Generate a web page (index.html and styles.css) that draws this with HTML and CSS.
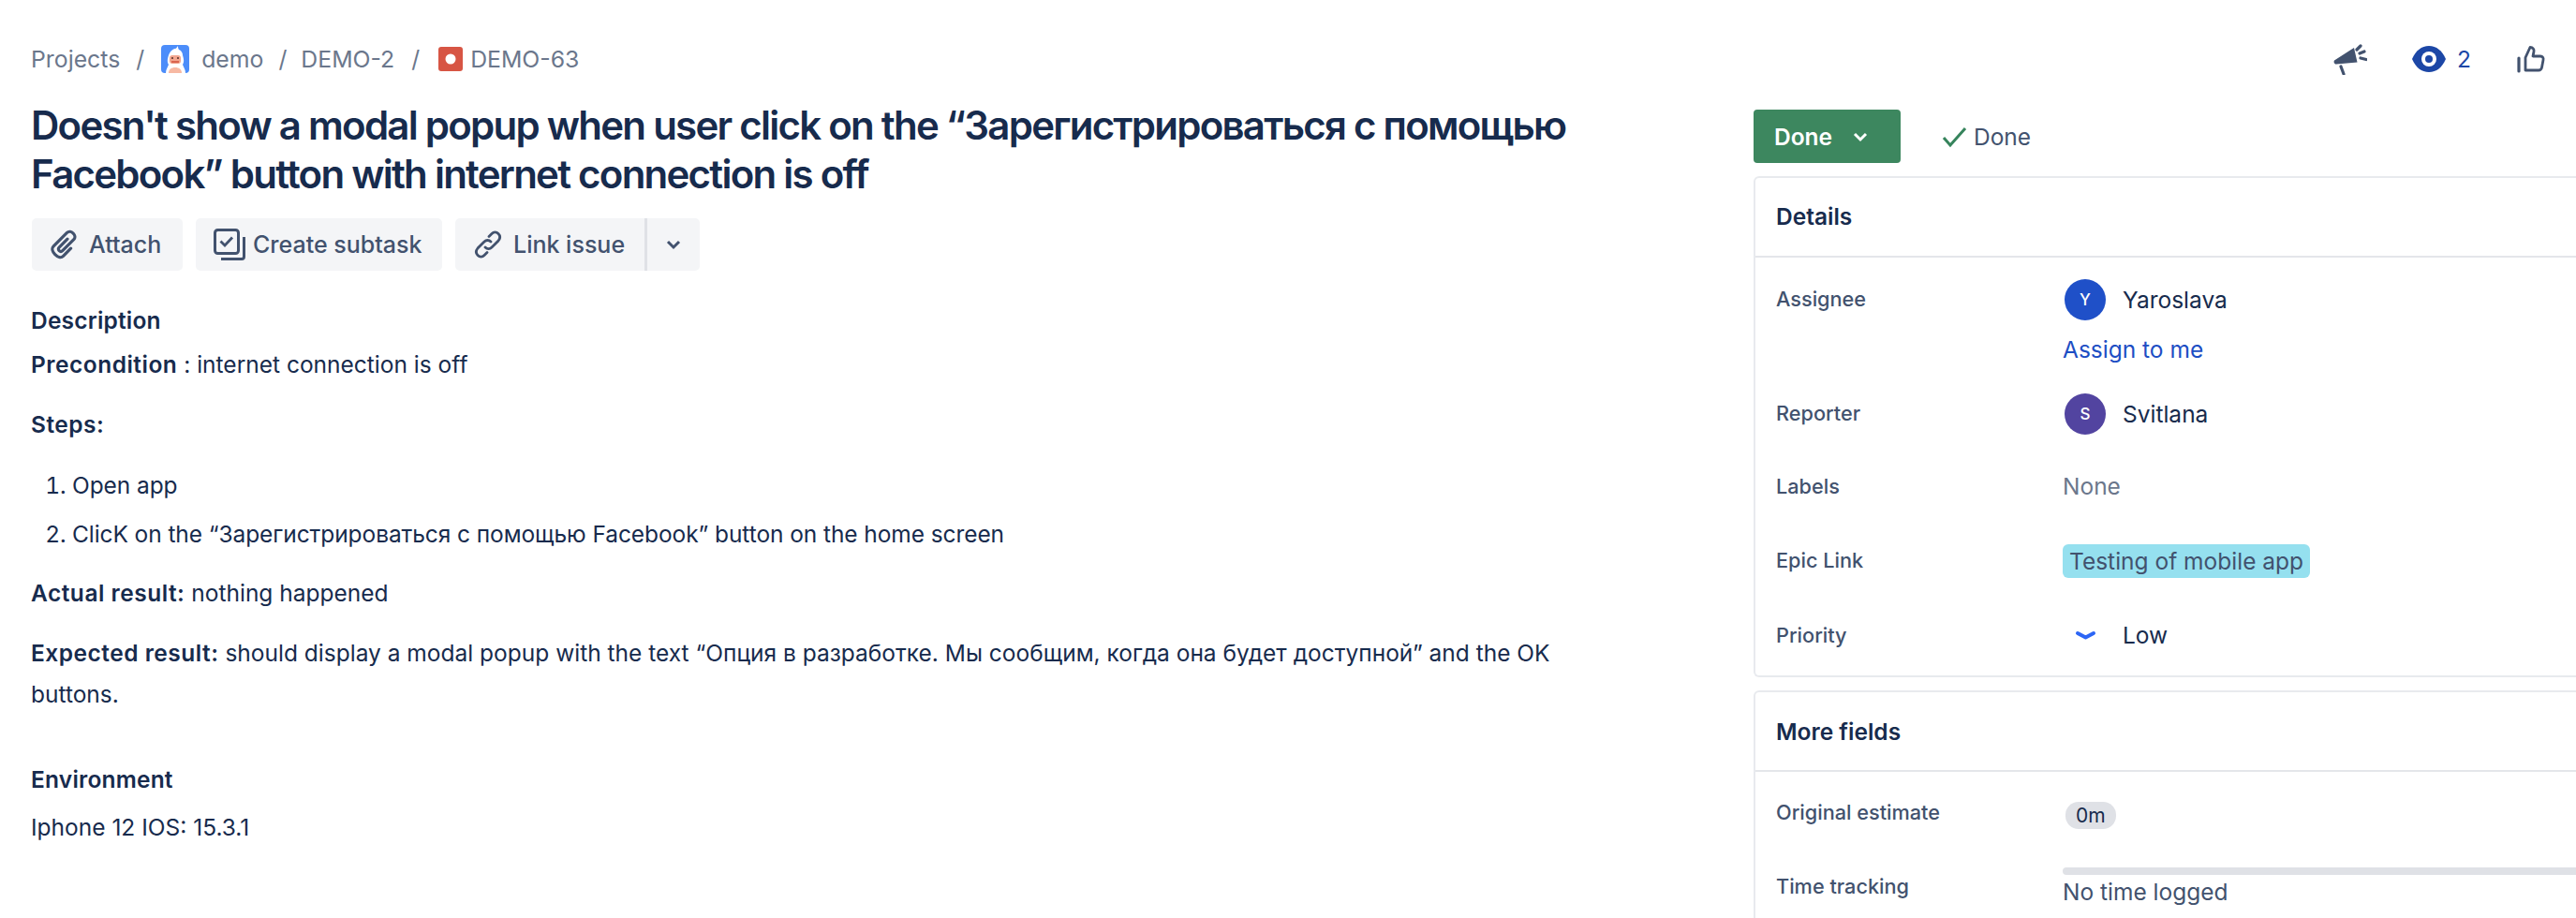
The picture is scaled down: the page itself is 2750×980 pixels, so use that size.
FILE: index.html
```html
<!DOCTYPE html>
<html>

	<head>
		<meta charset="UTF-8">
		<title>DEMO-63</title>
		<link rel="stylesheet" href="styles.css">
	</head>

	<body>
		<div class="page">
			<div class="topbar">
				<div class="crumbs">
					<span>Projects</span>
					<span class="sep">/</span>
					<svg class="crumb-avatar" viewBox="0 0 30 30">
						<rect width="30" height="30" rx="4" fill="#4c8dfa"/>
						<path d="M5 30c0-4 2-6 3-9-2-3-1-7 0-10 2-5 5-7 7-7 1 0 2-2 3-3 0 1 0 3 1 4 3 1 4 4 4 6 1 3 2 7 0 10 1 3 3 5 3 9z" fill="#fff"/>
						<rect x="9" y="11" width="12" height="9" rx="3" fill="#f2a58e"/>
						<rect x="11" y="17" width="8" height="2" fill="#d9644f"/>
						<rect x="11" y="13" width="2" height="2" fill="#7a4a3e"/>
						<rect x="17" y="13" width="2" height="2" fill="#7a4a3e"/>
						<path d="M8 30c0-4 3-6 7-6s7 2 7 6z" fill="#f7b9a3"/>
					</svg>
					<span>demo</span>
					<span class="sep sep-tight">/</span>
					<span>DEMO-2</span>
					<span class="sep sep-wide">/</span>
					<svg class="crumb-type" viewBox="0 0 26 26">
						<rect width="26" height="26" rx="3" fill="#d75544"/>
						<circle cx="13" cy="13" r="5.5" fill="#fff"/>
					</svg>
					<span class="crumb-key">DEMO-63</span>
				</div>
				<div class="top-actions">
					<svg class="act-icon" viewBox="0 0 36 34">
						<path d="M1 18.5 22 5l3.500 15.500L3 22.500c-2 .2-3-2.500-2-4z" fill="#42526e"/>
						<path d="M8 25l3 8" stroke="#42526e" stroke-width="3.200" stroke-linecap="round"/>
						<path d="M25 7l4-4M28 11l5-2M29 16l6 1.500" stroke="#42526e" stroke-width="3.200" stroke-linecap="round"/>
					</svg>
					<div class="watch">
						<svg class="eye" viewBox="0 0 36 28">
							<path d="M0 14C4 5 10 0 18 0s14 5 18 14c-4 9-10 14-18 14S4 23 0 14z" fill="#1c47a6"/>
							<circle cx="18" cy="14" r="8" fill="#fff"/>
							<circle cx="18" cy="14" r="4" fill="#1c47a6"/>
						</svg>
						<span>2</span>
					</div>
					<svg class="thumb" viewBox="0 0 30 30">
						<path d="M9 13.500 14 2.500c3 0 4.500 2 4 4.500l-1 5h8c2.500 0 3.500 2 3 4l-1.500 8c-.4 2-1.500 3-3.500 3H9z" fill="none" stroke="#42526e" stroke-width="2.800" stroke-linejoin="round"/>
						<path d="M2 14v14" stroke="#42526e" stroke-width="3.200" stroke-linecap="round"/>
					</svg>
				</div>
			</div>

			<div class="columns">
				<div class="main">
					<h1 class="title">Doesn't show a modal popup when user click on the “Зарегистрироваться с помощью Facebook” button with internet connection is off</h1>
					<div class="btn-row">
						<div class="btn btn-attach">
							<svg class="btn-icon clip" viewBox="2 2 26 30">
								<path d="M21.700 20.700L14.600 27.900C10.300 32.100 1.200 22.900 5.400 18.600L18.100 5.900C21.700 2.400 28 8.700 24.500 12.300L13.900 22.900C11.800 25 8.600 21.800 10.700 19.700L18.500 11.900" fill="none" stroke="#42526e" stroke-width="2.800" stroke-linecap="round" stroke-linejoin="round"/>
							</svg>
							<span>Attach</span>
						</div>
						<div class="btn btn-subtask">
							<svg class="btn-icon" viewBox="0 0 34 34">
								<rect x="1.500" y="1.500" width="25" height="25" rx="3" fill="none" stroke="#42526e" stroke-width="3"/>
								<path d="M7.500 13.500l4.500 4.500 8-8.500" fill="none" stroke="#42526e" stroke-width="2.800"/>
								<path d="M8 32.500h22c1.500 0 2.500-1 2.500-2.500V9" fill="none" stroke="#42526e" stroke-width="3"/>
							</svg>
							<span>Create subtask</span>
						</div>
						<div class="btn-group">
							<div class="btn btn-left">
								<svg class="btn-icon" viewBox="0 0 32 32">
									<path d="M13 19c2 2 5 2 7 0l7-7c2-2.500 2-5.500 0-7.500s-5-2-7 0l-3 3" fill="none" stroke="#42526e" stroke-width="2.800" stroke-linecap="round"/>
									<path d="M19 13c-2-2-5-2-7 0l-7 7c-2 2.500-2 5.500 0 7.500s5 2 7 0l3-3" fill="none" stroke="#42526e" stroke-width="2.800" stroke-linecap="round"/>
								</svg>
								<span>Link issue</span>
							</div>
							<div class="btn btn-right">
								<svg class="chev" viewBox="0 0 16 12">
									<path d="M2 3l6 6 6-6" fill="none" stroke="#42526e" stroke-width="3"/>
								</svg>
							</div>
						</div>
					</div>

					<h2 class="sec-title">Description</h2>
					<p><b>Precondition</b> : internet connection is off</p>
					<p><b>Steps:</b></p>
					<ol class="steps">
						<li>Open app</li>
						<li>ClicK on the “Зарегистрироваться с помощью Facebook” button on the home screen</li>
					</ol>
					<p><b>Actual result:</b> nothing happened</p>
					<p><b>Expected result:</b> should display a modal popup with the text “Опция в разработке. Мы сообщим, когда она будет доступной” and the OK buttons.</p>

					<h2 class="sec-title env-title">Environment</h2>
					<p>Iphone 12 IOS: 15.3.1</p>
				</div>

				<div class="side">
					<div class="status-row">
						<div class="status-btn">
							<span>Done</span>
							<svg class="status-chev" viewBox="0 0 16 12">
								<path d="M2 3l6 6 6-6" fill="none" stroke="#fff" stroke-width="3"/>
							</svg>
						</div>
						<div class="resolution">
							<svg class="check" viewBox="0 0 28 24">
								<path d="M2 13l7 8L25 3" fill="none" stroke="#36845c" stroke-width="3"/>
							</svg>
							<span>Done</span>
						</div>
					</div>

					<div class="panel">
						<div class="panel-head">Details</div>
						<div class="panel-body">
							<div class="field field-assignee">
								<div class="label">Assignee</div>
								<div class="value">
									<div class="person">
										<span class="avatar avatar-blue">Y</span>
										<span>Yaroslava</span>
									</div>
									<a class="assign-link">Assign to me</a>
								</div>
							</div>
							<div class="field field-reporter">
								<div class="label">Reporter</div>
								<div class="value">
									<div class="person">
										<span class="avatar avatar-purple">S</span>
										<span>Svitlana</span>
									</div>
								</div>
							</div>
							<div class="field field-labels">
								<div class="label">Labels</div>
								<div class="value muted">None</div>
							</div>
							<div class="field field-epic">
								<div class="label">Epic Link</div>
								<div class="value"><span class="epic">Testing of mobile app</span></div>
							</div>
							<div class="field field-priority">
								<div class="label">Priority</div>
								<div class="value">
									<div class="person">
										<svg class="prio" viewBox="0 0 44 16">
											<path d="M14 6l8.500 4.500L31 6" fill="none" stroke="#2d66f5" stroke-width="4" stroke-linecap="round" stroke-linejoin="round"/>
										</svg>
										<span>Low</span>
									</div>
								</div>
							</div>
						</div>
					</div>

					<div class="panel panel-more">
						<div class="panel-head panel-head-more">More fields</div>
						<div class="panel-body">
							<div class="field field-estimate">
								<div class="label">Original estimate</div>
								<div class="value"><span class="pill">0m</span></div>
							</div>
							<div class="field field-time">
								<div class="label">Time tracking</div>
								<div class="value">
									<div class="track"></div>
									<div class="muted-dark">No time logged</div>
								</div>
							</div>
						</div>
					</div>
				</div>
			</div>
		</div>
	</body>

</html>
```

FILE: styles.css
```css
html, body {
	margin: 0;
	padding: 0;
	height: 980px;
	overflow: hidden;
	background: #fff;
}
body {
	font-family: Inter, "Noto Sans", sans-serif;
	font-size: 24.5px;
	color: #172b4d;
}
h1, h2, p, ol {
	margin: 0;
	padding: 0;
}
.page {
	width: 2750px;
	height: 980px;
	padding: 44px 0 0 33px;
	box-sizing: border-box;
}

/* top line */
.topbar {
	display: flex;
	justify-content: space-between;
	align-items: center;
	height: 38px;
}
.crumbs {
	display: flex;
	align-items: center;
	color: #6b778c;
	font-size: 24.8px;
}
.sep {
	margin: 0 18px 0 17px;
}
.sep-tight {
	margin: 0 15px 0 16px;
}
.sep-wide {
	margin: 0 20px 0 18px;
}
.crumb-avatar {
	width: 30px;
	height: 30px;
	margin-right: 13px;
}
.crumb-type {
	width: 26px;
	height: 26px;
	margin-right: 8px;
}
.top-actions {
	display: flex;
	align-items: center;
	padding-right: 33px;
}
.act-icon {
	width: 36px;
	height: 34px;
	margin-right: 48px;
}
.watch {
	display: flex;
	align-items: center;
	color: #1c47a6;
	margin-right: 49px;
}
.eye {
	width: 36px;
	height: 28px;
	margin-right: 12px;
}
.thumb {
	width: 30px;
	height: 30px;
}

.columns {
	display: flex;
}
.main {
	width: 1839px;
	flex: none;
	padding-top: 26px;
}
.side {
	flex: 1;
	padding-top: 35px;
}

.title {
	font-size: 42px;
	font-weight: 600;
	line-height: 52px;
	width: 1680px;
	color: #172b4d;
	letter-spacing: -1.75px;
}
.btn-row {
	display: flex;
	gap: 14px;
	margin-top: 21px;
	margin-left: 1px;
}
.btn {
	display: flex;
	align-items: center;
	height: 56px;
	background: #f4f5f7;
	color: #42526e;
	font-size: 25px;
	font-weight: 500;
	border-radius: 5px;
	box-sizing: border-box;
}
.btn-icon {
	width: 32px;
	height: 34px;
	margin-right: 11px;
}
.btn-attach {
	width: 161px;
	padding-left: 19px;
}
.btn-icon.clip {
	width: 30px;
	margin-right: 12px;
}
.btn-subtask {
	width: 263px;
	padding-left: 19px;
}
.btn-subtask .btn-icon {
	width: 34px;
	margin-right: 8px;
}
.btn-group {
	display: flex;
}
.btn-left {
	width: 202px;
	border-radius: 5px 0 0 5px;
	padding-left: 19px;
}
.btn-right {
	width: 59px;
	border-radius: 0 5px 5px 0;
	border-left: 3px solid #dfe1e6;
	padding-left: 20px;
}
.chev {
	width: 16px;
	height: 12px;
}

.sec-title {
	font-size: 24.5px;
	font-weight: 600;
	letter-spacing: .2px;
	margin-top: 35px;
	margin-bottom: 7px;
	line-height: 36px;
}
.main p, .steps li {
	line-height: 44px;
}
.main p {
	margin-bottom: 20px;
	width: 1660px;
}
.main b {
	font-weight: 600;
	letter-spacing: .5px;
}
.steps {
	padding-left: 44px;
	margin-top: 21px;
	margin-bottom: 19px;
	letter-spacing: -.085px;
}
.steps li {
	margin-bottom: 8px;
}
.env-title {
	margin-top: 51px;
	margin-bottom: 11px;
}

/* right side */
.status-row {
	display: flex;
	align-items: center;
}
.status-btn {
	display: flex;
	align-items: center;
	width: 157px;
	height: 57px;
	background: #3d875f;
	color: #fff;
	font-weight: 600;
	border-radius: 4px;
	padding-left: 22px;
	box-sizing: border-box;
}
.status-chev {
	width: 16px;
	height: 12px;
	margin-left: 22px;
}
.resolution {
	display: flex;
	align-items: center;
	color: #42526e;
	margin-left: 44px;
}
.check {
	width: 28px;
	height: 24px;
	margin-right: 6px;
}

.panel {
	border: 2px solid #e8eaee;
	border-right: 0;
	border-radius: 6px 0 0 6px;
	margin-top: 14px;
}
.panel-more {
	border-bottom: 0;
	border-radius: 6px 0 0 0;
}
.panel-head {
	height: 83px;
	line-height: 83px;
	padding-left: 22px;
	font-weight: 600;
	border-bottom: 2px solid #e4e6ea;
}
.panel-head-more {
	line-height: 85px;
}
.field {
	display: flex;
	padding-left: 22px;
	box-sizing: border-box;
}
.label {
	width: 306px;
	flex: none;
	color: #42526e;
	font-size: 21.7px;
	font-weight: 500;
	line-height: 30px;
	padding-top: 6px;
}
.value {
	flex: 1;
	line-height: 30px;
}
.person {
	display: flex;
	align-items: center;
	gap: 18px;
	padding-left: 2px;
}
.avatar {
	width: 44px;
	height: 44px;
	border-radius: 50%;
	color: #fff;
	font-size: 17px;
	font-weight: 500;
	display: flex;
	align-items: center;
	justify-content: center;
}
.avatar-blue {
	background: #1f50c8;
}
.avatar-purple {
	background: #5244a0;
}
.assign-link {
	display: block;
	color: #1d4ec4;
	margin-top: 16px;
}
.muted {
	color: #6b778c;
}
.muted-dark {
	color: #42526e;
	line-height: 36px;
}
.epic {
	display: inline-block;
	background: #95e0ef;
	color: #42526e;
	border-radius: 6px;
	padding: 0 7px;
	line-height: 36px;
}
.prio {
	width: 44px;
	height: 16px;
}
.pill {
	display: inline-block;
	background: #dfe1e6;
	border-radius: 14px;
	font-size: 21px;
	padding: 0 11px;
	margin-left: 3px;
	line-height: 29px;
}
.track {
	height: 8px;
	background: #dfe1e6;
	border-radius: 4px 0 0 4px;
}
.field-assignee { padding-top: 23px; height: 145px; }
.field-reporter { height: 84px; }
.field-labels { height: 77px; }
.field-labels .label { padding-top: 0; }
.field-epic { height: 82px; }
.field-epic .label { padding-top: 2px; }
.field-priority { height: 58px; }
.field-priority .label { padding-top: 0; }
.field-estimate { height: 102px; padding-top: 28px; }
.field-estimate .label { padding-top: 0; }
.field-estimate .value { padding-top: 2px; }
.field-time { height: 54px; }
.field-time .label { padding-top: 5px; }
```
